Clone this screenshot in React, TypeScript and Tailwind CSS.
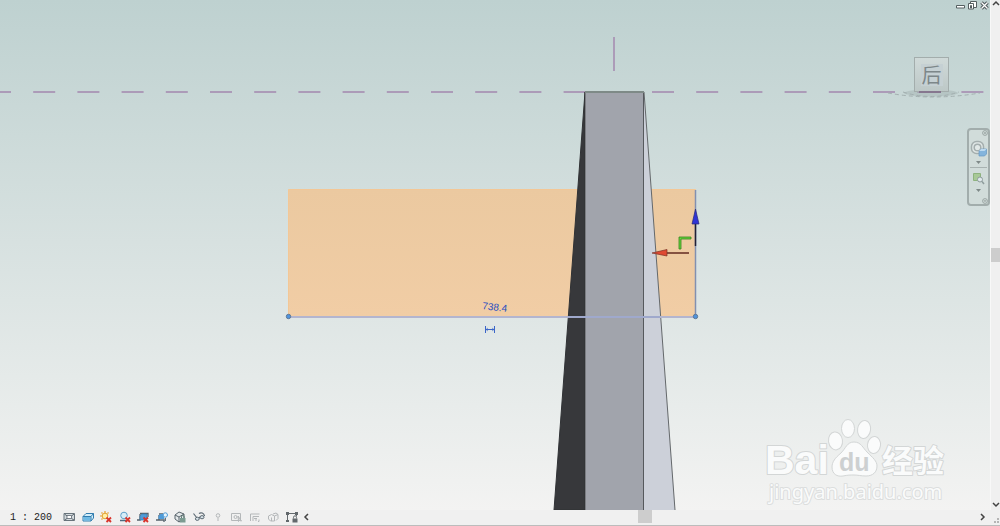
import React, { useState } from 'react';

const LINE = '#5b6670';
const BLUE = '#4f9bd8';

const Cross: React.FC = () => <path d="M6.500 6.500l4.500 4.500M11 6.500L6.500 11" stroke="#d8342c" strokeWidth="1.800" />;

const tools: { name: string; art: React.ReactNode; off?: boolean }[] = [
  {
    name: '详细程度',
    art: (
      <>
        <path d="M1 2.500h10.500v7H1z" fill="#d4dade" stroke="#69747c" />
        <path d="M1.500 3l2.500 2M11 3L8.500 5M1.500 9L4 7.500M11 9L8.500 7.500" stroke="#5b666e" />
        <path d="M4 4.500h4.500v3H4z" fill="#fff" stroke={LINE} strokeWidth=".8" />
      </>
    ),
  },
  {
    name: '视觉样式',
    art: (
      <>
        <path d="M1 5.500L4 2.500h7.500V7L9 10H1z" fill="#d2edfa" stroke="#307cae" />
        <path d="M1.500 6h7v3.500h-7z" fill="#6eb9e4" />
        <path d="M1 5.500h8l2.500-3M9 5.500V10" stroke="#307cae" />
      </>
    ),
  },
  {
    name: '关闭日光路径',
    art: (
      <>
        <path d="M5 0v2M0 5h2M1.500 1.500l1 1M8.500 1.500l-1 1M1.500 8.500l1-1" stroke="#e5a12b" strokeWidth="1.200" />
        <circle cx="5" cy="5" r="2.800" fill="#fff0a8" stroke="#e5a12b" />
        <Cross />
      </>
    ),
  },
  {
    name: '关闭阴影',
    art: (
      <>
        <circle cx="5" cy="4.500" r="3.300" fill="#d7edf8" stroke="#5d9fc8" />
        <path d="M1 9.500h6" stroke="#4e6c80" strokeWidth="1.500" />
        <Cross />
      </>
    ),
  },
  {
    name: '不裁剪视图',
    art: (
      <>
        <path d="M0 9h3V3M3 2.500h8V6" stroke="#55616b" strokeWidth="1.300" />
        <path d="M3 5l2-2h5v4L8 9H3z" fill={BLUE} stroke="#347fb4" strokeWidth=".7" />
        <Cross />
      </>
    ),
  },
  {
    name: '隐藏裁剪区域',
    art: (
      <>
        <path d="M0 9h3V4M3 3h4M3 9h5v2" stroke="#55616b" strokeWidth="1.300" />
        <path d="M2.500 5l2-2H8v5H2.500z" fill={BLUE} />
        <circle cx="9.300" cy="4" r="2.200" fill="#e8f4fb" stroke={BLUE} />
        <path d="M9.300 7v3" stroke="#65727c" strokeWidth="1.400" />
      </>
    ),
  },
  {
    name: '解锁的三维视图',
    art: (
      <>
        <path d="M1 4l4-3 5 2v5L5 11 1 8z" fill="#e4e8ea" stroke="#59646c" />
        <path d="M1 4l4 2 5-3M5 6v5" stroke="#59646c" />
        <path d="M6 7h5.500v4.500H6z" fill="#7b9b91" />
        <path d="M7.500 7V5.800a1.300 1.300 0 012.600 0V7" stroke="#5d7b73" />
      </>
    ),
  },
  {
    name: '临时隐藏',
    art: (
      <>
        <path d="M.500 2.500L4 7M5.500 7.500L7 6M6 2.500C8 1 11 2 11.500 5" stroke="#5c6973" strokeWidth="1.200" />
        <ellipse cx="4.300" cy="7.800" rx="1.900" ry="1.600" fill="#d8e2e8" stroke="#5c6973" />
        <ellipse cx="9" cy="6.200" rx="2" ry="1.600" fill="#d8e2e8" stroke="#5c6973" />
      </>
    ),
  },
  {
    name: '显示隐藏的图元',
    off: true,
    art: (
      <>
        <circle cx="6" cy="4.500" r="1.800" />
        <path d="M5 8h2M5.500 9.500h1" />
      </>
    ),
  },
  {
    name: '临时视图属性',
    off: true,
    art: (
      <>
        <path d="M1.500 2.500h9v7h-9z" />
        <circle cx="5.500" cy="6" r="1.500" />
        <path d="M8 5l3.500 5-2-.500-1 1z" fill="#d8d9da" />
      </>
    ),
  },
  { name: '显示分析模型', off: true, art: <path d="M1.500 10V3h9M4 10V5.500h6M5 7.500h3M7 10V7.500M10 8.500v2H9" /> },
  {
    name: '高亮显示位移集',
    off: true,
    art: <path d="M1.500 5l3-1.500 3 1.500v5h-4l-2-2zM4.500 6.500V10M6 3l3-1 2 1.500v4L9 9.500M7.500 5L11 3.500" />,
  },
  {
    name: '显示约束',
    art: (
      <>
        <path d="M1.500 1v10M10.500 1v4M1 2.500h10" stroke="#62686c" />
        <path d="M0 1h3v3H0zM9 1h3v3H9zM0 9h3v2H0z" fill="#62686c" />
        <path d="M6.500 7.500h5v4h-5z" fill="#62686c" />
        <path d="M7.500 7.500V6.300a1.500 1.500 0 013 0v1.200" stroke="#62686c" />
      </>
    ),
  },
];

const Chevron: React.FC<{ d: string; label: string }> = ({ d, label }) => (
  <button type="button" aria-label={label} className="shrink-0">
    <svg width="8" height="8" viewBox="0 0 8 8" fill="none" stroke="#444" strokeWidth="1.500">
      <path d={d} />
    </svg>
  </button>
);

const Model: React.FC = () => (
  <svg className="absolute inset-0 h-full w-full" viewBox="0 0 990 510" preserveAspectRatio="xMidYMid slice" fill="none">
    <defs>
      <linearGradient id="face" x1="0" y1="0" x2="0" y2="1">
        <stop offset="0" stopColor="#ebc9a0" />
        <stop offset="1" stopColor="#f1cda5" />
      </linearGradient>
    </defs>

    {/* 标高与参照平面 */}
    <path d="M-11 92H985" stroke="#ac9bb8" strokeWidth="2" strokeDasharray="22 22.200" />
    <path d="M614 37v34" stroke="#ac9bb8" strokeWidth="2" />

    <path d="M288.500 189.500h407v127h-407z" fill="url(#face)" stroke="#f3c796" />

    {/* 柱体 */}
    <path d="M585 92v418h-31z" fill="#37383b" stroke="#303235" />
    <path d="M644 92l31 418h-31z" fill="#ccd0d9" />
    <path d="M644 92l31 418" stroke="#64686b" />
    <path d="M585.500 92.500h58V510h-58z" fill="#a1a4ac" />
    <path d="M585.500 510V92" stroke="#7b7d82" />
    <path d="M643.500 92v418" stroke="#56595d" />
    <path d="M585 92h59" stroke="#7e8a87" strokeWidth="2" />

    {/* 选中的拉伸边 */}
    <path d="M288 317h407" stroke="#b3b5cf" strokeWidth="2" />
    <path d="M568 317h92" stroke="#8b9cc9" />
    <path d="M695.500 190v127" stroke="#8290b0" strokeWidth="1.500" />
    <circle cx="288.500" cy="316.500" r="2.200" fill="#4f94df" stroke="#5f7894" />
    <circle cx="695.500" cy="316.500" r="2.200" fill="#4f94df" stroke="#5f7894" />

    <path d="M695.500 222v24" stroke="#202036" strokeWidth="1.500" />
    <path d="M695.500 209l3.500 15h-7z" fill="#3034d6" stroke="#282974" strokeWidth=".7" />
    <path d="M665 253h24" stroke="#622a20" strokeWidth="1.500" />
    <path d="M652 253l15-3.500v6.500z" fill="#df4932" stroke="#7b3124" strokeWidth=".7" />
    <path d="M679 249v-12h12v2h-10v10z" fill="#65d53a" stroke="#36821f" strokeWidth=".8" />

    <text x="482" y="309" transform="rotate(7 482 309)" className="fill-[#294fc0] font-['Liberation_Sans'] text-[10px]">
      738.4
    </text>
    <path d="M485.500 326v7M494.500 326v7M486 329.500h8" stroke="#3c66c8" />
    <path d="M488 328l-2 1.500 2 1.500M492 328l2 1.500-2 1.500" stroke="#3c66c8" strokeWidth=".6" />
  </svg>
);

const Watermark: React.FC = () => (
  <svg className="absolute bottom-0 right-7 h-[100px] w-[200px]" viewBox="762 410 200 100" fill="#fafbfb" stroke="#d3d6d6">
    <g strokeWidth="2" paintOrder="stroke" strokeLinejoin="round">
      <text x="765" y="474" className="font-['Liberation_Sans',sans-serif] text-[41px] font-bold">Bai</text>
      <text x="882" y="472" className="font-['Noto_Sans_CJK_SC',sans-serif] text-[31px] font-bold">经验</text>
      <text x="769" y="499" className="font-['Noto_Sans',sans-serif] text-[20px]" stroke="#dcdede">jingyan.baidu.com</text>
    </g>
    <ellipse cx="835.500" cy="441" rx="7" ry="9" transform="rotate(-8 835 441)" />
    <ellipse cx="848" cy="428.500" rx="6.500" ry="9" />
    <ellipse cx="864" cy="429.500" rx="6.500" ry="9" transform="rotate(8 864 430)" />
    <ellipse cx="874" cy="445" rx="6.500" ry="8.500" transform="rotate(8 874 445)" />
    <path d="M854 442c-7 0-8 6-13 11-6 5-9 9-9 14 0 7 5 10 11 9 5-1 7-1 11-1s7 1 12 1c7 0 11-4 11-10 0-5-4-8-10-14-4-4-6-10-13-10z" />
    <text x="839" y="471" fill="#cdd0d1" stroke="none" className="font-['Liberation_Sans',sans-serif] text-[25px] font-bold">du</text>
  </svg>
);

const WindowButtons: React.FC = () => (
  <div className="absolute right-px top-0 flex gap-[3px] pt-px">
    <button type="button" aria-label="最小化">
      <svg width="9" height="9" viewBox="0 0 9 9" fill="#fff" stroke="#555f61">
        <path d="M.5 4.500h8v2.500h-8z" />
      </svg>
    </button>
    <button type="button" aria-label="还原">
      <svg width="9" height="9" viewBox="0 0 9 9" fill="#fff" stroke="#555f61">
        <path d="M2.500 3V.5h6v6H6M.5 2.500h5v5.500h-5zM2.500 4.500h1V7h-1z" />
      </svg>
    </button>
    <button type="button" aria-label="关闭">
      <svg width="9" height="9" viewBox="0 0 9 9" fill="none">
        <path d="M1.500 1.500l6 6M7.500 1.500l-6 6" stroke="#555f61" strokeWidth="3.500" />
        <path d="M1.500 1.500l6 6M7.500 1.500l-6 6" stroke="#fff" strokeWidth="1.200" />
      </svg>
    </button>
  </div>
);

const ViewCube: React.FC = () => (
  <div className="absolute right-0 top-[56px] w-[112px]">
    <svg className="absolute left-0 top-[30px]" width="112" height="16" viewBox="0 0 112 16" fill="none">
      <ellipse cx="53" cy="7" rx="27" ry="3.500" fill="#9aabaa" opacity=".4" />
      <path d="M10 7q44 8 92 0M25 6q28 9 56 0" stroke="#a3b0b0" strokeDasharray="4 3" />
    </svg>
    <button
      type="button"
      aria-label="视图方向"
      className="relative ml-[36px] mt-px flex h-[35px] w-[35px] items-center justify-center border border-[#a3adac] bg-linear-to-b from-[#d0dad9] to-[#bdc8c7]"
    >
      <span className="flex h-[22px] w-[22px] items-center justify-center bg-[#c5d0d3] font-['Noto_Sans_CJK_SC',sans-serif] text-[20px] leading-none text-[#7d8789]">
        后
      </span>
    </button>
    <svg className="absolute left-[41px] top-[35px]" width="22" height="2" viewBox="0 0 22 2">
      <path d="M0 1h22" stroke="#86778f" strokeWidth="2" />
    </svg>
  </div>
);

const NavigationBar: React.FC = () => (
  <div className="absolute right-0 top-[128px] flex h-[78px] w-[23px] flex-col items-center rounded-sm border-2 border-[#a2adac] bg-[#d1dcda]">
    <button type="button" aria-label="关闭导航栏" className="self-end">
      <svg width="6" height="6" viewBox="0 0 6 6" fill="none" stroke="#8e9897">
        <circle cx="3" cy="3" r="2.400" strokeWidth=".8" />
        <path d="M2 2l2 2M4 2L2 4" strokeWidth=".6" />
      </svg>
    </button>
    <button type="button" aria-label="全导航控制盘" className="mt-1">
      <svg width="17" height="17" viewBox="0 0 17 17" fill="none">
        <rect x="1.500" y="1.500" width="12" height="12" rx="5" fill="#e1e8e7" stroke="#a4aeae" strokeWidth="1.500" />
        <circle cx="7.500" cy="7.500" r="3.300" stroke="#a4aeae" strokeWidth="1.500" />
        <path d="M9 11l2-2h5.500v5l-2 2H9z" fill="#83b4dc" stroke="#6798c1" strokeWidth=".7" />
        <path d="M9 11l2-2h5.500l-2 2z" fill="#bddaf0" />
      </svg>
    </button>
    <svg className="mt-1" width="5" height="3" viewBox="0 0 5 3" fill="#7f8988">
      <path d="M0 0h5L2.500 3z" />
    </svg>
    <hr className="mt-[3px] w-[17px] border-[#a8b2b1]" />
    <button type="button" aria-label="区域放大" className="mt-1">
      <svg width="13" height="13" viewBox="0 0 13 13" fill="none">
        <path d="M1.500 1.500h7v7h-7z" fill="#a8c997" stroke="#8eb37e" />
        <circle cx="8" cy="7.500" r="2.500" fill="#dfe8eb" stroke="#8e9c9c" />
        <path d="M10 9.500l2 2.500" stroke="#8e9c9c" strokeWidth="1.500" />
      </svg>
    </button>
    <svg className="mt-1" width="5" height="3" viewBox="0 0 5 3" fill="#7f8988">
      <path d="M0 0h5L2.500 3z" />
    </svg>
    <button type="button" aria-label="自定义" className="mt-auto self-end">
      <svg width="6" height="6" viewBox="0 0 6 6" fill="none" stroke="#8e9897">
        <circle cx="3" cy="3" r="2.400" strokeWidth=".8" />
        <path d="M2 2.500h2L3 4z" strokeWidth=".5" />
      </svg>
    </button>
  </div>
);

export default function App() {
  const [active, setActive] = useState<string | null>(null);

  return (
    <div className="flex h-screen flex-col overflow-hidden bg-[#f0f0f0] font-['Liberation_Sans','Noto_Sans_CJK_SC',sans-serif]">
      <div className="flex min-h-0 flex-1">
        <main className="relative min-w-0 flex-1 overflow-hidden bg-linear-to-b from-[#bed1d0] to-[#f3f3f2]">
          <Model />
          <Watermark />
          <ViewCube />
          <NavigationBar />
          <WindowButtons />
        </main>
        <div className="flex w-[10px] flex-col items-end justify-between overflow-hidden border-l border-[#f8f8f8] bg-[#f0f0f0] pb-px">
          <Chevron label="向上滚动" d="M1 5l3-3 3 3" />
          <div className="h-[14px] w-full bg-[#cdcdcd]" />
          <Chevron label="向下滚动" d="M1 2l3 3 3-3" />
        </div>
      </div>

      <footer className="flex h-4 shrink-0 items-center border-b border-[#bcbcbc] pr-px">
        <button type="button" className="w-[63px] pl-[10px] text-left font-['Liberation_Mono',monospace] text-[10px] leading-[12px] text-[#222]">
          1 : 200
        </button>
        <div className="flex w-[235px] justify-between pb-[2px]">
          {tools.map((tool) => (
            <button
              key={tool.name}
              type="button"
              title={tool.name}
              aria-pressed={active === tool.name}
              onClick={() => setActive(tool.name)}
            >
              <svg width="12" height="12" viewBox="0 0 12 12" fill="none" stroke={tool.off ? '#b4b7b9' : undefined}>
                {tool.art}
              </svg>
            </button>
          ))}
        </div>
        <div className="ml-1 flex flex-1 items-center justify-between pb-[2px]">
          <Chevron label="向左滚动" d="M6 1L3 4l3 3" />
          <div className="h-[13px] w-[14px] bg-[#cdcdcd]" />
          <Chevron label="向右滚动" d="M2 1l3 3-3 3" />
        </div>
        <svg className="ml-[6px]" width="6" height="12" viewBox="0 0 6 12" fill="#b5b5b5">
          <path d="M4 6h2v2H4zM4 9h2v2H4zM1 9h2v2H1z" />
        </svg>
      </footer>
    </div>
  );
}
